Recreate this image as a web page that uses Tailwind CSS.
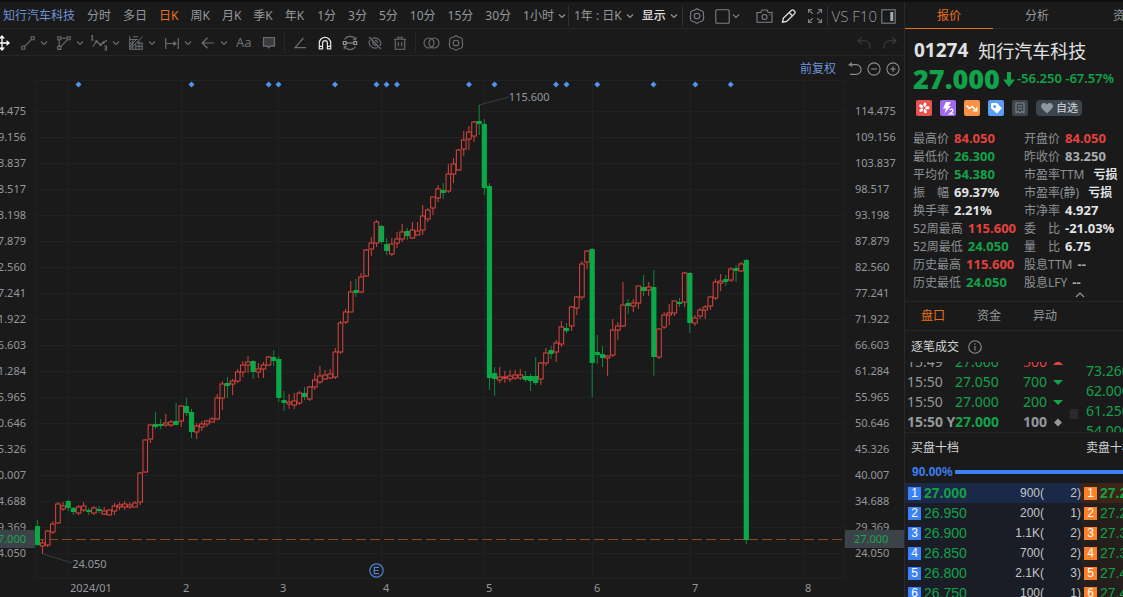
<!DOCTYPE html>
<html lang="zh-CN">
<head>
<meta charset="utf-8">
<title>知行汽车科技 01274</title>
<script src="https://cdn.jsdelivr.net/npm/@tailwindcss/browser@4"></script>
</head>
<body class="bg-[#1a1a1a]">
<svg class="hidden" aria-hidden="true">
  <symbol id="chev" viewBox="0 0 8 8"><path d="M1 2.5 4 5.5 7 2.5" fill="none" stroke="currentColor" stroke-width="1.1"/></symbol>
  <symbol id="hex" viewBox="0 0 16 16"><g fill="none" stroke="currentColor" stroke-width="1.1"><path d="M6.2 1.6Q8 .1 9.8 1.6 11 2.7 12.6 2.8 14.9 3.4 14.4 5.6 13.9 7 14.5 8 15.1 9.4 14.4 10.6 14.4 13 12.6 13.2 11 13.3 9.8 14.4 8 15.9 6.2 14.4 5 13.3 3.4 13.2 1.4 12.8 1.6 10.6 .9 9.4 1.5 8 2.1 7 1.6 5.6 1.2 3.4 3.4 2.8 5 2.7 6.2 1.6Z"/><circle cx="8" cy="8" r="2.8"/></g></symbol>
</svg>
<div class="flex h-screen flex-col overflow-hidden border-t-2 border-[#0e0e0e] bg-[#1a1a1a] font-['Noto_Sans','Noto_Sans_CJK_SC',sans-serif] text-xs text-[#94989d]">
<div class="flex min-h-0 flex-1">

<main class="flex min-w-0 flex-1 flex-col">
  <nav class="flex h-[27px] shrink-0 items-center border-b border-[#262626] pt-0.5 pl-[3px] whitespace-nowrap" aria-label="周期">
    <div class="flex items-center gap-3">
      <a href="#" class="text-[#6e93d6]">知行汽车科技</a>
      <button>分时</button><button>多日</button><button class="text-[#e8711c]">日K</button><button>周K</button><button>月K</button><button>季K</button><button>年K</button>
    </div>
    <div class="ml-[13px] flex items-center gap-3">
      <button>1分</button><button>3分</button><button>5分</button><button>10分</button><button>15分</button><button>30分</button>
    </div>
    <button class="ml-3 flex items-center gap-1">1小时<svg class="size-2"><use href="#chev"/></svg></button>
    <span class="ml-0.5 h-5 w-px bg-[#303030]"></span>
    <button class="ml-[5px] flex items-center gap-1">1年 : 日K<svg class="size-2"><use href="#chev"/></svg></button>
    <button class="ml-2 flex items-center gap-1 font-medium text-[#dcdcdc]">显示<svg class="size-2 text-[#94989d]"><use href="#chev"/></svg></button>
    <div class="ml-auto flex items-center pr-2 text-[#7c8187]">
      <span class="h-5 w-px bg-[#303030]"></span>
      <button class="ml-1.5" aria-label="设置"><svg class="size-4"><use href="#hex"/></svg></button>
      <button class="ml-2.5 flex items-center gap-0.5" aria-label="布局"><svg class="size-[15px]" viewBox="0 0 15 15"><rect x=".8" y=".8" width="13.4" height="13.4" rx="1" fill="none" stroke="currentColor" stroke-width="1.1"/></svg><svg class="size-2"><use href="#chev"/></svg></button>
      <button class="ml-4" aria-label="截图"><svg class="h-4 w-[17px]" viewBox="0 0 17 16" fill="none" stroke="currentColor" stroke-width="1.1"><path d="M1 4.5h3.8L6 2h5l1.2 2.5H16v9.7H1z"/><circle cx="8.5" cy="9" r="2.5"/><path d="M13 6.7h1.2"/></svg></button>
      <button class="ml-2 text-[#e4e4e4]" aria-label="画线"><svg class="size-4" viewBox="0 0 16 16" fill="none" stroke="currentColor" stroke-width="1.3"><path d="M1.5 14.2 2.4 10 10.6 2.3Q11.7 1.4 12.8 2.4L13.8 3.5Q14.6 4.6 13.6 5.6L5.7 13.4Z"/><path d="m8.3 4.6 3.3 3.4"/></svg></button>
      <button class="ml-2.5" aria-label="全屏"><svg class="size-4" viewBox="0 0 16 16" fill="none" stroke="currentColor" stroke-width="1.1"><path d="M1.5 5V1.5H5M1.5 1.5l4.3 4.3M11 1.5h3.5V5M14.5 1.5l-4.3 4.3M1.5 11v3.5H5M1.5 14.5l4.3-4.3M11 14.5h3.5V11M14.5 14.5l-4.3-4.3"/></svg></button>
      <span class="ml-1 h-5 w-px bg-[#303030]"></span>
      <button class="ml-[3px] font-['Open_Sans',sans-serif] text-[15px] font-light text-[#9a9ea3]">VS</button>
      <button class="ml-1 font-['Open_Sans',sans-serif] text-[15px] font-light text-[#9a9ea3]">F10</button>
      <button class="ml-1" aria-label="侧栏"><svg class="size-[15px]" viewBox="0 0 15 15"><rect x=".8" y=".8" width="13.4" height="13.4" fill="none" stroke="currentColor" stroke-width="1.1"/><path d="M9.3 3h3v9h-3z" fill="#a4adb6"/></svg></button>
    </div>
  </nav>

  <div class="flex h-[27px] shrink-0 items-center border-b border-[#262626] pt-px text-[#6b6e72]" role="toolbar" aria-label="画线工具">
    <div class="flex w-[21px] overflow-hidden text-white"><svg class="-ml-1.5 h-4 w-4 shrink-0" viewBox="0 0 16 16" fill="none" stroke="currentColor" stroke-width="1.3"><path d="M8 1v14M1 8h14"/><path fill="currentColor" stroke="none" d="M8 0l3 3.4H5zM8 16l3-3.4H5zM0 8l3.4-3v6zM16 8l-3.4-3v6z"/></svg></div>
    <button class="flex w-9 items-center gap-[5px]" aria-label="线段"><svg class="size-3.5" viewBox="0 0 14 14" fill="none" stroke="currentColor" stroke-width="1.1"><path d="M.8 10.2h3v3h-3zM10.2.8h3v3h-3zM3.6 10.4l6.8-6.8"/></svg><svg class="size-2"><use href="#chev"/></svg></button>
    <button class="flex w-9 items-center gap-[5px]" aria-label="形状"><svg class="size-3.5" viewBox="0 0 14 14" fill="none" stroke="currentColor" stroke-width="1.1"><path d="M.8.8h3v3h-3zM10.2.8h3v3h-3zM.8 10.4h3v3h-3zM3.8 2.2h6.4M2.2 3.8v6.6M3.6 10.6l7-7"/></svg><svg class="size-2"><use href="#chev"/></svg></button>
    <button class="flex w-9 items-center gap-[3px]" aria-label="波浪"><svg class="-ml-0.5 h-4 w-[17px]" viewBox="0 0 17 16" fill="none" stroke="currentColor" stroke-width="1.1"><path d="M0 1.5 1.3.6V5M0 5h2.8M2 11.5 5.5 6 9.5 10 12 8 16 5M13.3 11h2.2v4h-2.2M13.6 13h1.9"/><circle cx="5.5" cy="6.5" r=".8"/><circle cx="9.5" cy="9.7" r=".8"/><circle cx="12.5" cy="7.5" r=".8"/></svg><svg class="ml-px size-2"><use href="#chev"/></svg></button>
    <button class="flex w-9 items-center gap-[5px]" aria-label="斐波那契"><svg class="size-3.5" viewBox="0 0 14 14" fill="none" stroke="currentColor"><path d="M.7 0v13.3H14M3.8 3.5v9.5M.7 3.5H9M.7 7h3M8 7h5.7M.7 10.3h2M7 10.3h6.7M1 13 13.5.8M6.8 8v5M10 5v8M13 7v6M4 .8h5M1 10 8 3"/></svg><svg class="size-2"><use href="#chev"/></svg></button>
    <button class="flex w-9 items-center gap-[5px]" aria-label="测量"><svg class="size-3.5" viewBox="0 0 14 14" fill="none" stroke="currentColor" stroke-width="1.2"><path d="M.7 2v11M13.3 2v11M1 7.5h9"/><path d="M8.5 4.8 12 7.5 8.5 10.2z" fill="currentColor" stroke="none"/></svg><svg class="size-2"><use href="#chev"/></svg></button>
    <button class="flex w-[35px] items-center gap-[5px]" aria-label="箭头"><svg class="size-3.5" viewBox="0 0 14 14" fill="none" stroke="currentColor" stroke-width="1.2"><path d="M13 7H1.5M6.5 1.8 1.2 7l5.3 5.2"/></svg><svg class="size-2"><use href="#chev"/></svg></button>
    <button class="text-[13px]">Aa</button>
    <button class="ml-2.5" aria-label="注释"><svg class="size-3.5" viewBox="0 0 14 14"><path d="M1.5 1.5h11v8.7H8L6.8 12 5.5 10.2h-4z" fill="#3a3c3f" stroke="currentColor" stroke-width="1.2"/></svg></button>
    <span class="ml-2 h-5 w-px bg-[#262626]"></span>
    <button class="ml-2" aria-label="画笔"><svg class="size-3.5" viewBox="0 0 14 14" fill="none" stroke="currentColor" stroke-width="1.2"><path d="M10.5 2 2 11.7h11"/></svg></button>
    <button class="ml-[11px] text-[#e6e6e6]" aria-label="磁吸"><svg class="size-3.5" viewBox="0 0 14 14" fill="none" stroke="currentColor" stroke-width="1.2"><path d="M1.3 12.8V7a5.7 5.7 0 0 1 11.4 0v5.8H9.4V7a2.4 2.4 0 0 0-4.8 0v5.8zM1.3 10.3h3.3M9.4 10.3h3.3"/></svg></button>
    <button class="ml-2.5" aria-label="锁定"><svg class="size-4" viewBox="0 0 16 16" fill="none" stroke="currentColor" stroke-width="1.1"><path d="M2.5 4.5a6.4 6.4 0 0 1 11 0M2.5 11.5a6.4 6.4 0 0 0 11 0M13.8 1.8v3h-3M2.2 14.2v-3h3"/><path stroke="#9a9da0" d="M1.3 6.5h2.8v3H1.3zM11.9 6.5h2.8v3h-2.8zM4.1 8h7.8"/></svg></button>
    <button class="ml-2.5" aria-label="隐藏"><svg class="size-3.5" viewBox="0 0 14 14" fill="none" stroke="currentColor" stroke-width="1.1"><path d="M4.2 2.4Q8 .8 11 3.6 14.5 7 11.8 10M9.8 11.6Q6 13.2 3 10.4-.5 7 2.2 4M1 1l12 12M5.2 5.2a2.6 2.6 0 0 0 3.6 3.6M7 4.4A2.6 2.6 0 0 1 9.6 7"/></svg></button>
    <button class="ml-[11px]" aria-label="删除"><svg class="size-3.5" viewBox="0 0 14 14" fill="none" stroke="currentColor" stroke-width="1.1"><path d="M1 3.3h12M4.8 3V1.2h4.4V3M2.3 3.3v9.9h9.4V3.3M5.3 6v4.5M8.7 6v4.5"/></svg></button>
    <span class="ml-2 h-5 w-px bg-[#262626]"></span>
    <button class="ml-[7px]" aria-label="对比"><svg class="h-3 w-[17px]" viewBox="0 0 17 12" fill="none" stroke="currentColor" stroke-width="1.1"><circle cx="6" cy="6" r="5"/><circle cx="11" cy="6" r="5"/></svg></button>
    <button class="ml-2" aria-label="设置"><svg class="size-4"><use href="#hex"/></svg></button>
    <button class="ml-auto text-[#3c3e40]" aria-label="撤销"><svg class="size-3.5" viewBox="0 0 14 14" fill="none" stroke="currentColor" stroke-width="1.1"><path d="M5 1.3 1 4.8 5 8.3M1.3 4.8H8q5 .3 5 7.7"/></svg></button>
    <button class="mr-[7px] ml-3 text-[#3c3e40]" aria-label="重做"><svg class="size-3.5" viewBox="0 0 14 14" fill="none" stroke="currentColor" stroke-width="1.1"><path d="m9 1.3 4 3.5-4 3.5M12.7 4.8H6q-5 .3-5 7.7"/></svg></button>
  </div>

  <div class="flex h-6 shrink-0 items-center justify-end pt-px pr-1 text-[#8a8d91]">
    <button class="mr-3 text-[#6e93d6]">前复权</button>
    <button class="mr-[5px]" aria-label="还原"><svg class="size-3.5" viewBox="0 0 14 14" fill="none" stroke="currentColor" stroke-width="1.1"><path d="M4 .8 1.6 2.6h6.6a4.9 4.9 0 0 1 0 9.8H2M1.6 2.6 4 4.6"/></svg></button>
    <button class="mr-[5px]" aria-label="缩小"><svg class="size-3.5" viewBox="0 0 14 14" fill="none" stroke="currentColor" stroke-width="1.1"><circle cx="7" cy="7" r="6.1"/><path d="M4.2 7h5.6"/></svg></button>
    <button aria-label="放大"><svg class="size-3.5" viewBox="0 0 14 14" fill="none" stroke="currentColor" stroke-width="1.1"><circle cx="7" cy="7" r="6.1"/><path d="M4.2 7h5.6M7 4.2v5.6"/></svg></button>
  </div>

  <div class="flex h-[499px] shrink-0 text-[11px]">
    <div class="relative flex w-[35px] flex-col items-end overflow-hidden pt-[18px] pr-[9px]">
      <div id="axisL" class="flex flex-col items-end *:h-[26px] *:leading-[26px]"></div>
      <div class="absolute inset-x-0 top-[450px] flex h-[18px] items-center justify-end bg-[#3c4348] pr-[9px] text-[#1fa250]">27.000</div>
    </div>
    <div class="relative min-w-0 flex-1">
      <svg id="plot" class="block h-full w-full" viewBox="35 80 810 499" preserveAspectRatio="none"></svg>
      <span class="absolute top-[9px] left-[58.5%] leading-4">115.600</span>
      <span class="absolute top-[476px] left-[4.6%] leading-4">24.050</span>
      <svg class="absolute top-[483px] left-[41.2%] size-[15px]" viewBox="0 0 15 15" fill="none" stroke="#4b82cc" stroke-width="1.2"><circle cx="7.5" cy="7.5" r="6.7"/><path d="M10 4.3H5.3v6.4H10M5.3 7.5h4.4"/></svg>
    </div>
    <div class="relative w-[59px] pt-[18px] pl-2.5">
      <div id="axisR" class="flex flex-col *:h-[26px] *:leading-[26px]"></div>
      <div class="absolute inset-x-0 top-[450px] flex h-[18px] items-center bg-[#3c4348] pl-[9px] text-[#1fa250]">27.000</div>
    </div>
  </div>
  <div class="flex h-[18px] shrink-0 items-center pr-[59px] pl-[70px] text-[11px]">
    <span class="grow-[113] basis-0">2024/01</span><span class="grow-[97] basis-0">2</span><span class="grow-[103] basis-0">3</span><span class="grow-[103] basis-0">4</span><span class="grow-[108] basis-0">5</span><span class="grow-[98] basis-0">6</span><span class="grow-[113] basis-0">7</span><span class="grow-[40] basis-0">8</span>
  </div>
</main>

<aside class="flex w-[219px] shrink-0 flex-col overflow-hidden border-l border-[#2a2a2a] whitespace-nowrap">
  <div class="flex h-[27px] shrink-0 border-b border-[#262626]">
    <button class="-mb-px w-[88px] shrink-0 border-b border-[#e8711c] pt-0.5 text-[#e8711c]">报价</button>
    <button class="w-[88px] shrink-0 pt-0.5">分析</button>
    <button class="w-[88px] shrink-0 pt-0.5">资讯</button>
  </div>
  <h1 class="mt-2 flex h-7 shrink-0 items-center gap-2.5 pl-[9px] text-lg text-[#e0e2e4]"><b class="text-[19px]">01274</b>知行汽车科技</h1>
  <div class="flex h-7 shrink-0 items-center pl-2 font-semibold text-[#12a24a]">
    <b class="text-[27px] leading-7">27.000</b>
    <svg class="mr-0.5 ml-[3px] h-[15px] w-3 shrink-0" viewBox="0 0 12 15"><path d="M4 0h4v7.5h4L6 15 0 7.5h4z" fill="currentColor"/></svg>
    <span class="text-[13px]">-56.250 -67.57%</span>
  </div>
  <div class="mt-1.5 flex h-[18px] shrink-0 items-center gap-2 pl-[11px]">
    <svg class="size-4" viewBox="0 0 16 16"><rect width="16" height="16" rx="2" fill="#e9524f"/><g fill="#fff"><ellipse cx="8" cy="4.6" rx="1.5" ry="2.2" transform="rotate(15 8 8)"/><ellipse cx="8" cy="4.6" rx="1.5" ry="2.2" transform="rotate(87 8 8)"/><ellipse cx="8" cy="4.6" rx="1.5" ry="2.2" transform="rotate(159 8 8)"/><ellipse cx="8" cy="4.6" rx="1.5" ry="2.2" transform="rotate(231 8 8)"/><ellipse cx="8" cy="4.6" rx="1.5" ry="2.2" transform="rotate(303 8 8)"/></g></svg>
    <svg class="size-4" viewBox="0 0 16 16"><rect width="16" height="16" rx="2" fill="#a06af0"/><path d="M6 2h5L8.5 6H11l-6.5 7.5L6 8.5H3z" fill="#fff"/><path d="M9.8 9.8q1.7-1.3 3 0 .8 1.3-3 4h3.7" fill="none" stroke="#fff" stroke-width="1.3"/></svg>
    <svg class="size-4" viewBox="0 0 16 16"><rect width="16" height="16" rx="2" fill="#fb9146"/><path d="m2.5 5.5 3 3 2.5-2 4.5 4M12.7 7.2v3.5H9.3" fill="none" stroke="#fff" stroke-width="1.4"/></svg>
    <svg class="size-4" viewBox="0 0 16 16"><rect width="16" height="16" rx="2" fill="#5c9df5"/><path d="M3 3.8 3.8 3H9l4.8 5.2L9 13.5 3 8.3z" fill="#fff"/><circle cx="6.7" cy="6.6" r="1.5" fill="#5c9df5"/></svg>
    <svg class="size-4" viewBox="0 0 16 16"><rect width="16" height="16" rx="2" fill="#3d454c"/><path d="M4 3h8v10l-2-1.5L8 13l-2-1.5L4 13zM6 6h4M6 8.7h4" fill="none" stroke="#7b848c" stroke-width="1.1"/></svg>
    <button class="flex h-4 items-center gap-0.5 rounded-sm bg-[#3d454c] px-1 text-[11px] text-[#d2d6da]"><svg class="size-3.5" viewBox="0 0 14 14"><path d="M7 12.5 1.7 7.3Q0 5 1.8 2.9 4.5.8 7 3.4 9.5.8 12.2 2.9 14 5 12.3 7.3z" fill="#8d969e"/></svg>自选</button>
  </div>
  <dl class="mt-[13px] grid shrink-0 auto-rows-[18px] grid-cols-[111px_auto] items-center pl-2 text-[13px] font-bold text-[#e2e4e6] *:flex *:items-center *:gap-[5px] [&_dt]:text-xs [&_dt]:font-normal [&_dt]:text-[#8d9196]">
    <div><dt>最高价</dt><dd class="text-[#e2423d]">84.050</dd></div><div><dt>开盘价</dt><dd class="text-[#e2423d]">84.050</dd></div>
    <div><dt>最低价</dt><dd class="text-[#12a24a]">26.300</dd></div><div><dt>昨收价</dt><dd class="text-[#a9adb2]">83.250</dd></div>
    <div><dt>平均价</dt><dd class="text-[#12a24a]">54.380</dd></div><div><dt>市盈率TTM</dt><dd class="pl-1 text-xs">亏损</dd></div>
    <div><dt>振　幅</dt><dd>69.37%</dd></div><div><dt>市盈率(静)</dt><dd class="pl-1 text-xs">亏损</dd></div>
    <div><dt>换手率</dt><dd>2.21%</dd></div><div><dt>市净率</dt><dd>4.927</dd></div>
    <div><dt>52周最高</dt><dd class="text-[#e2423d]">115.600</dd></div><div><dt>委　比</dt><dd>-21.03%</dd></div>
    <div><dt>52周最低</dt><dd class="text-[#12a24a]">24.050</dd></div><div><dt>量　比</dt><dd>6.75</dd></div>
    <div><dt>历史最高</dt><dd class="text-[#e2423d]">115.600</dd></div><div><dt>股息TTM</dt><dd class="text-[#a9adb2]">--</dd></div>
    <div><dt>历史最低</dt><dd class="text-[#12a24a]">24.050</dd></div><div><dt>股息LFY</dt><dd class="text-[#a9adb2]">--</dd></div>
  </dl>
  <button class="ml-[169px] flex h-[9px] w-3 shrink-0 justify-center" aria-label="收起"><svg class="h-1.5 w-2.5" viewBox="0 0 10 6"><path d="M1 5 5 1l4 4" fill="none" stroke="currentColor" stroke-width="1.2"/></svg></button>
  <div class="flex h-[30px] shrink-0 items-center gap-8 border-y border-[#262626] pl-4">
    <button class="text-[#e8711c]">盘口</button><button>资金</button><button>异动</button>
  </div>
  <h2 class="flex h-[31px] shrink-0 items-center gap-[9px] pl-1.5 text-[#d0d2d4]">逐笔成交<svg class="size-3.5" viewBox="0 0 14 14" fill="none" stroke="#8a8d91" stroke-width="1.1"><circle cx="7" cy="7" r="6.3"/><path d="M7 6v4.5M7 3.3v1.4"/></svg></h2>
  <div class="flex h-[71px] shrink-0 overflow-hidden border-b border-[#262626] text-sm">
    <table class="-mt-2.5 h-20 w-[159px] shrink-0 table-fixed self-start leading-5">
      <tr class="h-5"><td class="w-[50px] pl-0.5">15:49</td><td class="w-[50px] text-[#12a24a]">27.000</td><td class="w-[42px] text-right text-[#e2423d]">500</td><td class="pl-1.5 text-[#e2423d]"><svg class="w-2.5" viewBox="0 0 10 5"><path d="M0 5 5 0l5 5z" fill="currentColor"/></svg></td></tr>
      <tr class="h-5"><td class="pl-0.5">15:50</td><td class="text-[#12a24a]">27.050</td><td class="text-right text-[#12a24a]">700</td><td class="pl-1.5 text-[#12a24a]"><svg class="w-2.5" viewBox="0 0 10 5"><path d="M0 0h10L5 5z" fill="currentColor"/></svg></td></tr>
      <tr class="h-5"><td class="pl-0.5">15:50</td><td class="text-[#12a24a]">27.000</td><td class="text-right text-[#12a24a]">200</td><td class="pl-1.5 text-[#12a24a]"><svg class="w-2.5" viewBox="0 0 10 5"><path d="M0 0h10L5 5z" fill="currentColor"/></svg></td></tr>
      <tr class="h-5 font-bold"><td class="pl-0.5">15:50 Y</td><td class="text-[#12a24a]">27.000</td><td class="text-right">100</td><td class="pl-1.5"><svg class="w-2.5" viewBox="0 0 10 9"><path d="M5 .5 9 4.5 5 8.5 1 4.5z" fill="currentColor"/></svg></td></tr>
    </table>
    <div class="mt-[47px] ml-1.5 h-2.5 w-2 shrink-0 bg-[#2b2b2b]"></div>
    <div class="-mt-px ml-2 shrink-0 leading-5 text-[#12a24a]"><div>73.260</div><div>62.000</div><div>61.250</div><div>54.000</div></div>
  </div>
  <div class="flex h-[30px] shrink-0 items-center pl-1.5 text-[#d0d2d4]"><h2 class="w-[175px] shrink-0">买盘十档</h2><h2>卖盘十档</h2></div>
  <div class="flex h-5 shrink-0 items-center gap-0.5 pb-0.5 pl-[7px] font-['Liberation_Sans',sans-serif] font-bold text-[#3b82f6]">90.00%<span class="h-1 grow bg-[#3b82f6]"></span></div>
  <div class="flex font-['Liberation_Sans',sans-serif]">
    <table class="w-[176px] shrink-0 table-fixed self-start bg-[#1a1d26] text-[#c4c6c9]"><tbody id="bids"></tbody></table>
    <table class="w-[176px] shrink-0 table-fixed self-start bg-[#241e1c] text-[#c4c6c9]"><tbody id="asks"></tbody></table>
  </div>
</aside>
</div>
</div>

<script>
const levels = ['114.475','109.156','103.837','98.517','93.198','87.879','82.560','77.241','71.922','66.603','61.284','55.965','50.646','45.326','40.007','34.688','29.369','24.050'];
for (const id of ['axisL', 'axisR']) document.getElementById(id).innerHTML = levels.map(v => `<span>${v}</span>`).join('');

// One entry per day: direction (r = up, g = down), wick top, body top, body bottom, wick bottom
const days = `g520,526,545,546 r540,543,546,554 r530,531,545,547 r521,524,532,534 r502,504,523,524 r502,506,509,511 g500,501,508,511 g507,508,512,515 r505,507,513,515 r502,506,510,512
g508,510,512,515 r506,508,513,515 g506,509,511,513 r507,511,514,515 r509,510,515,515 r503,506,511,515 r502,505,507,510 r501,504,507,510 r502,505,507,509 r501,503,507,507
r472,473,502,505 r439,440,472,473 r424,425,439,443 g412,424,427,429 g419,424,426,429 r414,423,425,427 r420,422,425,427 g403,421,425,425 r405,406,421,427 g398,406,413,416
g409,412,432,438 r423,426,432,439 r421,424,427,431 r420,421,424,427 r417,419,422,422 r394,398,419,420 r381,384,398,410 g377,383,386,398 r379,381,384,395 r369,372,381,383
r361,365,372,377 r356,362,365,373 g360,361,372,379 r363,369,372,378 r362,365,369,378 r356,357,365,366 g350,357,361,366 g356,359,398,402 g391,400,403,411 r394,402,404,409
r393,401,405,409 r391,393,403,405 g387,393,397,400 r386,387,399,401 r373,380,387,390 r366,376,382,384 r370,375,379,380 r369,374,378,379 r348,352,377,379 r321,323,352,354
r309,312,322,324 r281,292,312,312 g279,290,293,297 r273,277,292,293 r249,250,276,277 r237,243,249,256 r220,222,243,247 g225,226,242,244 g238,244,251,255 r238,244,254,256
r232,239,243,248 r224,232,239,242 g228,231,236,240 r222,230,238,239 r222,231,235,235 r205,216,230,235 r208,210,219,222 r197,197,208,215 r185,189,198,202 g183,190,193,199
r164,174,191,193 r158,164,174,183 r149,150,170,171 r131,140,149,156 r126,132,139,150 r121,122,136,142 g105,121,124,135 g119,124,188,195 g183,186,378,390 g367,373,379,396
r367,377,380,383 r371,377,378,383 r370,376,379,382 r370,375,378,380 r369,375,378,380 g371,376,380,382 g374,376,381,391 g357,376,383,385 r362,363,379,385 r348,353,363,366
g346,350,354,359 r340,343,352,362 r321,327,344,347 g323,328,331,333 r306,307,326,331 r296,297,308,315 r261,264,297,300 r250,251,262,269 g248,249,363,397 g335,352,355,364
g346,354,358,367 r355,356,358,376 r319,330,355,357 r322,326,330,340 r282,305,326,327 g299,303,306,314 r299,303,306,312 r286,286,303,309 g275,287,291,296 r282,287,290,296
g270,287,357,376 r328,329,357,359 r312,315,327,329 r304,313,315,325 r301,301,313,316 g298,302,304,307 r272,273,302,307 g272,273,323,333 r315,318,323,326 r308,310,316,319
r305,307,310,319 r296,297,306,310 r279,282,298,300 r274,281,283,291 g275,279,282,286 r267,269,280,282 g265,268,271,282 r262,264,271,272 g259,260,540,544`.split(/\s+/);
let s = '<g stroke="#202121">';
for (const y of [80.5, ...levels.map((_, i) => 111.5 + 26 * i), 578.5]) s += `<path d="M35 ${y}H845"/>`;
for (const x of [35.5, 68.5, 181.5, 278.5, 381.5, 484.5, 592.5, 690.5, 803.5, 844.5]) s += `<path d="M${x} 80V579"/>`;
s += '</g><path d="M35 539.5H845" stroke="#8a4a1f" stroke-dasharray="10 4" stroke-dashoffset="1"/><path d="M43 554 72 563M479 105 509 97" stroke="#3c3d3e"/>';
days.forEach((d, i) => {
  const x = 37.4 + 5.137 * i, [h, t, b, l] = d.slice(1).split(',').map(Number);
  s += d[0] === 'g'
    ? `<path d="M${x} ${h}V${l}" stroke="#0c8a3e"/><rect x="${x - 2.6}" y="${t}" width="5.2" height="${b - t}" fill="#0ba848"/>`
    : `<path d="M${x} ${h}V${t}M${x} ${b}V${l}" stroke="#d2433c"/><rect x="${x - 2.3}" y="${t}" width="4.6" height="${b - t}" fill="#1a1a1a" stroke="#dc463f"/>`;
});
for (const x of [78.5, 191.5, 268.7, 278.5, 335, 376.5, 386.5, 397, 469, 494.5, 556, 566.5, 597.3, 653.5, 695.3, 730.7]) s += `<path d="M${x} 81.5l3 3-3 3-3-3z" fill="#4f93ec"/>`;
document.getElementById('plot').innerHTML = s;

const row = (i, price, vol, n, badge, first) => `<tr class="h-5 ${i ? '' : first}"><td class="w-[19px] pl-[3px]"><span class="block h-[13px] w-[13px] text-center leading-[13px] text-white ${badge}">${i + 1}</span></td><td class="w-[50px] text-sm leading-5 text-[#12a24a] ${i ? '' : 'font-bold'}">${price}</td><td class="w-[70px] text-right">${vol}(</td><td class="text-right">${n})</td></tr>`;
document.getElementById('bids').innerHTML = [['27.000','900',2],['26.950','200',1],['26.900','1.1K',2],['26.850','700',2],['26.800','2.1K',3],['26.750','100',1]].map((r, i) => row(i, ...r, 'bg-[#3b82f6]', 'bg-[#192947]')).join('');
document.getElementById('asks').innerHTML = [['27.200','100',1],['27.250','200',1],['27.300','300',1],['27.350','100',1],['27.400','500',2],['27.450','200',1]].map((r, i) => row(i, ...r, 'bg-[#fb8028]', 'bg-[#3a2517]')).join('');
</script>
</body>
</html>
